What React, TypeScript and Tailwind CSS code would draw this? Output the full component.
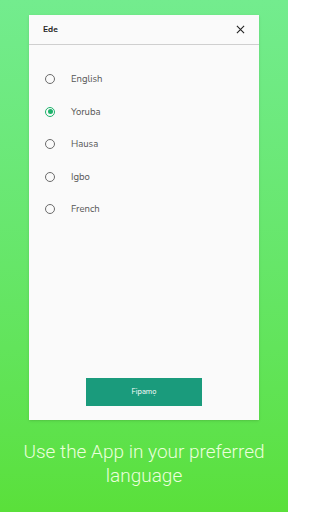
import { useState } from "react";

const LANGUAGES = ["English", "Yoruba", "Hausa", "Igbo", "French"];

function Radio({ checked }: { checked: boolean }) {
  return (
    <span
      className={`flex h-[10px] w-[10px] items-center justify-center rounded-full border ${
        checked ? "border-[#1db36b]" : "border-[#6b6b6b]"
      }`}
    >
      {checked && <span className="h-[5px] w-[5px] rounded-full bg-[#1db36b]" />}
    </span>
  );
}

export default function App() {
  const [selected, setSelected] = useState("Yoruba");

  return (
    <div className="flex h-[512px] w-[288px] flex-col items-center bg-gradient-to-b from-[#73ec8e] to-[#5ae03a] pt-[15px] font-['Nunito','Lato','Noto_Sans',sans-serif]">
      <div className="flex h-[405px] w-[230px] flex-col bg-[#fafafa] shadow-sm">
        <div className="flex h-[30px] items-center justify-between border-b border-[#cfcfcf] pl-[14px] pr-[14px]">
          <span className="text-[8.5px] font-bold text-[#222]">Ede</span>
          <svg width="9" height="9" viewBox="0 0 10 10" className="text-[#222]">
            <path d="M1 1 L9 9 M9 1 L1 9" stroke="currentColor" strokeWidth="1.2" />
          </svg>
        </div>

        <ul className="flex flex-col pt-[18px]">
          {LANGUAGES.map((lang) => (
            <li
              key={lang}
              onClick={() => setSelected(lang)}
              className="flex h-[32.5px] items-center gap-[16px] pl-[16px]"
            >
              <Radio checked={selected === lang} />
              <span className="text-[9.5px] text-[#555]">{lang}</span>
            </li>
          ))}
        </ul>

        <div className="mt-auto mb-[14px] flex justify-center">
          <button
            type="button"
            className="h-[28px] w-[116px] bg-[#1a9b7c] text-[7.5px] text-white"
          >
            Fipamọ
          </button>
        </div>
      </div>

      <p className="mt-[20px] w-[280px] text-center font-['Roboto',sans-serif] text-[19px] font-light leading-[24px] text-[#eaffdc]">
        Use the App in your preferred language
      </p>
    </div>
  );
}
